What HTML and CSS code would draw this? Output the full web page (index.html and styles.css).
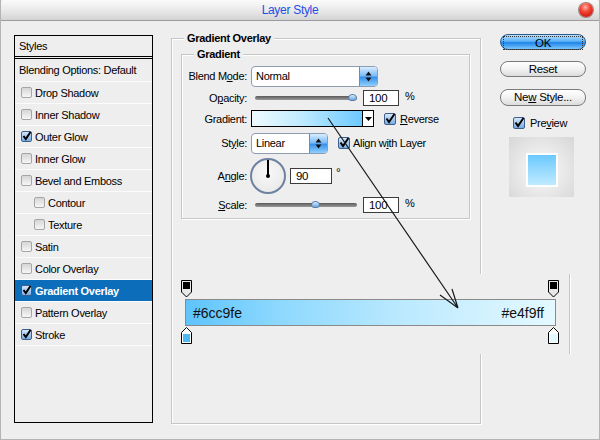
FILE: index.html
```html
<!DOCTYPE html>
<html lang="en">

<head>
  <meta charset="UTF-8" />
  <meta name="viewport" content="width=device-width, initial-scale=1.0" />
  <title>Layer Style</title>
  <link rel="stylesheet" href="styles.css">
</head>

<body>
  <div class="window">
    <div class="titlebar">
      <span class="title">Layer Style</span>
      <span class="close"></span>
    </div>

    <div class="main">
      <!-- left list of effects -->
      <div class="styles">
        <div class="styles-head">Styles</div>
        <div class="styles-blend">Blending Options: Default</div>
        <div class="item"><span class="cb"></span>Drop Shadow</div>
        <div class="item"><span class="cb"></span>Inner Shadow</div>
        <div class="item"><span class="cb on"><svg width="11" height="11" viewBox="0 0 11 11"><path d="M2.5 5 L4.8 8 L9.5 1" fill="none" stroke="#000" stroke-width="2"/></svg></span>Outer Glow</div>
        <div class="item"><span class="cb"></span>Inner Glow</div>
        <div class="item"><span class="cb"></span>Bevel and Emboss</div>
        <div class="item sub"><span class="cb"></span>Contour</div>
        <div class="item sub"><span class="cb"></span>Texture</div>
        <div class="item"><span class="cb"></span>Satin</div>
        <div class="item"><span class="cb"></span>Color Overlay</div>
        <div class="item selected"><span class="cb on"><svg width="11" height="11" viewBox="0 0 11 11"><path d="M2.5 5 L4.8 8 L9.5 1" fill="none" stroke="#000" stroke-width="2"/></svg></span>Gradient Overlay</div>
        <div class="item"><span class="cb"></span>Pattern Overlay</div>
        <div class="item"><span class="cb on"><svg width="11" height="11" viewBox="0 0 11 11"><path d="M2.5 5 L4.8 8 L9.5 1" fill="none" stroke="#000" stroke-width="2"/></svg></span>Stroke</div>
      </div>

      <!-- settings -->
      <div class="group outer">
        <div class="legend">Gradient Overlay</div>
        <div class="group inner">
          <div class="legend">Gradient</div>
          <div class="form">
            <div class="frow r-blend">
              <label>Blend M<u>o</u>de:</label>
              <div class="select blend">
                <span>Normal</span>
                <span class="spin"><svg width="7" height="11" viewBox="0 0 7 11"><path d="M3.5 0.5 L6.5 4.5 H0.5 Z M3.5 10.5 L6.5 6.5 H0.5 Z" fill="#111"/></svg></span>
              </div>
            </div>
            <div class="frow r-opacity">
              <label>O<u>p</u>acity:</label>
              <div class="slider"><span class="knob" style="left: 97px"></span></div>
              <div class="field num">100</div>
              <span class="unit">%</span>
            </div>
            <div class="frow r-gradient">
              <label>Gradient:</label>
              <div class="grad-pick">
                <span class="grad-swatch"></span>
                <span class="grad-drop"><svg width="7" height="4" viewBox="0 0 7 4"><path d="M0 0 H7 L3.5 4 Z" fill="#000"/></svg></span>
              </div>
              <span class="cb big on"><svg width="12" height="12" viewBox="0 0 12 12"><path d="M2.5 5.5 L5 9 L10.5 1" fill="none" stroke="#000" stroke-width="2"/></svg></span>
              <span class="check-label"><u>R</u>everse</span>
            </div>
            <div class="frow r-style">
              <label>St<u>y</u>le:</label>
              <div class="select kind">
                <span>Linear</span>
                <span class="spin"><svg width="7" height="11" viewBox="0 0 7 11"><path d="M3.5 0.5 L6.5 4.5 H0.5 Z M3.5 10.5 L6.5 6.5 H0.5 Z" fill="#111"/></svg></span>
              </div>
              <span class="cb big on align"><svg width="12" height="12" viewBox="0 0 12 12"><path d="M2.5 5.5 L5 9 L10.5 1" fill="none" stroke="#000" stroke-width="2"/></svg></span>
              <span class="check-label">Align w<u>i</u>th Layer</span>
            </div>
            <div class="frow r-angle">
              <label>A<u>n</u>gle:</label>
              <div class="dial"><span class="needle"></span><span class="hub"></span></div>
              <div class="field deg">90</div>
              <span class="degree">°</span>
            </div>
            <div class="frow r-scale">
              <label><u>S</u>cale:</label>
              <div class="slider"><span class="knob" style="left: 60px"></span></div>
              <div class="field num">100</div>
              <span class="unit">%</span>
            </div>
          </div>
        </div>
      </div>

      <!-- buttons -->
      <div class="actions">
        <div class="btn ok"><span>OK</span></div>
        <div class="btn">Reset</div>
        <div class="btn">Ne<u>w</u> Style...</div>
        <div class="preview-check">
          <span class="cb big on"><svg width="12" height="12" viewBox="0 0 12 12"><path d="M2.5 5.5 L5 9 L10.5 1" fill="none" stroke="#000" stroke-width="2"/></svg></span>
          <span>Pre<u>v</u>iew</span>
        </div>
        <div class="preview"><span class="preview-swatch"></span></div>
      </div>
    </div>

    <!-- gradient editor strip pasted over the dialog -->
    <div class="editor">
      <div class="stops">
        <svg width="11" height="18" viewBox="0 0 11 18"><path d="M0.5 0.5 H10.5 V12 L5.5 17 L0.5 12 Z" fill="#e8e8e8" stroke="#000"/><rect x="2" y="2" width="7" height="7" fill="#000"/></svg>
        <svg width="11" height="18" viewBox="0 0 11 18"><path d="M0.5 0.5 H10.5 V12 L5.5 17 L0.5 12 Z" fill="#e8e8e8" stroke="#000"/><rect x="2" y="2" width="7" height="7" fill="#000"/></svg>
      </div>
      <div class="bar">
        <span>#6cc9fe</span>
        <span>#e4f9ff</span>
      </div>
      <div class="stops bottom">
        <svg width="11" height="17" viewBox="0 0 11 17"><path d="M5.5 0.5 L10.5 5.5 V16.5 H0.5 V5.5 Z" fill="#fff" stroke="#000"/><rect x="2" y="7" width="7" height="8" fill="#4db8f4"/></svg>
        <svg width="11" height="17" viewBox="0 0 11 17"><path d="M5.5 0.5 L10.5 5.5 V16.5 H0.5 V5.5 Z" fill="#fff" stroke="#000"/><rect x="2" y="7" width="7" height="8" fill="#e4f9ff"/></svg>
      </div>
    </div>

    <svg class="arrow" width="600" height="440" viewBox="0 0 600 440">
      <path d="M327 118 L457 308 M457 308 L439 295 M457 308 L451 289" fill="none" stroke="#1a1a1a" stroke-width="1.2"/>
    </svg>
  </div>
</body>

</html>
```

FILE: styles.css
```css
body {
  margin: 0;
  background: #eeeeee;
  font-family: "Liberation Sans", Arial, sans-serif;
  font-size: 11px;
  letter-spacing: -0.3px;
  color: #000;
}

u {
  text-decoration: underline;
  text-underline-offset: 1px;
}

.window {
  position: relative;
  width: 600px;
  height: 440px;
  box-sizing: border-box;
  border: 1px solid #b4b4b4;
  border-top: none;
  background: #eeeeee;
  overflow: hidden;
}

.titlebar {
  height: 20px;
  display: flex;
  align-items: center;
  border-bottom: 1px solid #9c9c9c;
  background: linear-gradient(#fbfbfb, #e6e6e6 60%, #d3d3d3);
  border-radius: 4px 4px 0 0;
}

.title {
  flex: 1;
  text-align: center;
  color: #1d4fe6;
  font-size: 12px;
}

.close {
  width: 14px;
  height: 14px;
  margin-right: 6px;
  border-radius: 50%;
  background: radial-gradient(circle at 45% 30%, #ffb0a8 0, #f04030 40%, #b80c00 100%);
  box-shadow: 0 0 0 1px #a08080;
}

.main {
  display: flex;
  align-items: flex-start;
}

/* effect list */
.styles {
  margin: 14px 0 0 13px;
  width: 139px;
  height: 388px;
  box-sizing: border-box;
  border: 1px solid #000;
}

.styles-head {
  height: 20px;
  line-height: 20px;
  padding-left: 4px;
  border-bottom: 3px double #000;
}

.styles-blend {
  height: 22px;
  line-height: 22px;
  padding-left: 4px;
  border-bottom: 1px solid #fbfbfb;
}

.item {
  height: 21px;
  display: flex;
  align-items: center;
  padding-left: 6px;
  border-bottom: 1px solid #fbfbfb;
}

.item .cb {
  margin-right: 3px;
}

.item.sub {
  padding-left: 19px;
}

.item.selected {
  background: #0c6dbb;
  color: #fff;
  font-weight: bold;
}

.cb {
  flex: none;
  display: inline-block;
  width: 11px;
  height: 11px;
  box-sizing: border-box;
  margin-right: 2px;
  border: 1px solid #a6a6a6;
  border-radius: 2px;
  background: linear-gradient(#d6d6d6, #f6f6f6);
}

.cb.on {
  border-color: #3f5f8a;
  background: linear-gradient(#d5e7fa, #78ace3);
}

.cb svg {
  display: block;
  margin: -1px 0 0 -1px;
}

.cb.big {
  width: 12px;
  height: 12px;
}

/* etched group boxes */
.group {
  box-sizing: border-box;
  border: 1px solid #c6c6c6;
  box-shadow: inset 1px 1px 0 #fff, 1px 1px 0 #fff;
}

.group.outer {
  margin: 17px 0 0 18px;
  width: 310px;
  height: 386px;
}

.group.inner {
  margin: 9px 10px 0 9px;
  height: 165px;
}

.legend {
  display: table;
  margin: -7px 0 0 12px;
  padding: 0 3px;
  line-height: 13px;
  background: #eeeeee;
  font-weight: bold;
}

.form {
  padding-top: 4px;
}

.frow {
  display: flex;
  align-items: center;
}

.frow label {
  width: 65px;
  margin-right: 4px;
  text-align: right;
}

.r-blend,
.r-opacity,
.r-scale {
  height: 22px;
}

.r-gradient {
  height: 19px;
}

.r-style {
  height: 30px;
}

.r-angle {
  height: 36px;
}

.select {
  display: flex;
  align-items: center;
  justify-content: space-between;
  height: 21px;
  box-sizing: border-box;
  border: 1px solid #8d9cb0;
  border-radius: 4px;
  background: #fff;
  padding-left: 4px;
  overflow: hidden;
}

.select.blend {
  width: 127px;
}

.select.kind {
  width: 77px;
}

.spin {
  width: 17px;
  height: 19px;
  display: flex;
  align-items: center;
  justify-content: center;
  border-left: 1px solid #5c8fc8;
  background: linear-gradient(#d8eeff, #7dbcf6 45%, #3b92ea 55%, #8fd0ff);
}

.slider {
  position: relative;
  margin-left: 4px;
  width: 102px;
  height: 4px;
  border-radius: 2px;
  background: linear-gradient(#5a5a5a, #9a9a9a);
}

.knob {
  position: absolute;
  top: -2px;
  width: 9px;
  height: 7px;
  border-radius: 4px 4px 3px 3px;
  background: linear-gradient(#d6ecff, #6aa8e0);
  border: 1px solid #5a7ea6;
  box-sizing: border-box;
  margin-left: -4px;
}

.field {
  height: 16px;
  box-sizing: border-box;
  border: 1px solid #3c3c3c;
  background: #fff;
  line-height: 14px;
  padding-left: 5px;
  font-size: 11.5px;
}

.field.num {
  width: 36px;
  margin-left: 6px;
}

.unit {
  margin-left: 6px;
  align-self: flex-start;
  margin-top: 3px;
}

.grad-pick {
  display: flex;
  height: 17px;
  box-sizing: border-box;
  border: 1px solid #000;
}

.grad-swatch {
  width: 110px;
  background: linear-gradient(to right, #effbff, #bfeaff 45%, #6cc9fe);
  border-right: 1px solid #000;
}

.grad-drop {
  width: 10px;
  display: flex;
  align-items: center;
  justify-content: center;
  background: #fff;
}

.r-gradient .cb {
  margin-left: 10px;
  margin-right: 4px;
}

.r-style .cb {
  margin-left: 10px;
  margin-right: 3px;
}

.dial {
  position: relative;
  margin-left: -1px;
  width: 36px;
  height: 36px;
  box-sizing: border-box;
  border-radius: 50%;
  border: 2px solid #6d82a0;
  background: radial-gradient(circle at 50% 40%, #f8f8f8, #e6e6e6);
}

.needle {
  position: absolute;
  left: 15px;
  top: 0;
  width: 2px;
  height: 16px;
  background: #000;
}

.hub {
  position: absolute;
  left: 14px;
  top: 14px;
  width: 4px;
  height: 4px;
  border-radius: 50%;
  background: #000;
}

.field.deg {
  width: 42px;
  margin-left: 4px;
}

.degree {
  align-self: flex-start;
  margin: 8px 0 0 4px;
  font-size: 12px;
}

/* right buttons */
.actions {
  margin: 13px 0 0 19px;
  width: 86px;
  display: flex;
  flex-direction: column;
}

.btn {
  height: 16px;
  box-sizing: border-box;
  border: 1px solid #7a7a7a;
  border-radius: 8px;
  background: linear-gradient(#ffffff, #f2f2f2 50%, #dcdcdc);
  text-align: center;
  line-height: 14px;
  font-size: 11.5px;
  margin-top: 11px;
}

.btn + .btn + .btn {
  height: 17px;
  line-height: 15px;
  margin-top: 12px;
}

.btn.ok {
  margin-top: 0;
  border-color: #2c5b8e;
  background: linear-gradient(#bfe2ff, #5ab2f8 45%, #1f84e6 55%, #7cc8ff);
  padding: 1px 2px;
}

.btn.ok span {
  display: block;
  height: 12px;
  line-height: 12px;
  border: 1px dotted #333;
}

.preview-check {
  display: flex;
  align-items: center;
  margin: 10px 0 0 13px;
  height: 13px;
}

.preview-check .cb {
  margin-right: 5px;
}

.preview {
  margin: 8px 0 0 9px;
  width: 65px;
  height: 60px;
  display: flex;
  justify-content: center;
  align-items: flex-start;
  padding-top: 16px;
  box-sizing: border-box;
  background: radial-gradient(ellipse at 50% 55%, #f0f0f0 30%, #d6d6d6 100%);
}

.preview-swatch {
  width: 28px;
  height: 30px;
  border: 2px solid #fff;
  background: linear-gradient(#6cc9fe, #bfeaff);
}

/* gradient editor strip */
.editor {
  position: absolute;
  left: 172px;
  top: 274px;
  width: 396px;
  height: 80px;
  background: #eeeeee;
  border-right: 1px solid #c6c6c6;
  box-shadow: 1px 0 0 #fff;
}

.stops {
  margin: 6px 0 0 8px;
  width: 378px;
  height: 18px;
  display: flex;
  justify-content: space-between;
}

.stops svg {
  display: block;
}

.stops.bottom {
  margin-top: 1px;
  height: 17px;
}

.bar {
  margin: 1px 0 0 12px;
  width: 371px;
  height: 27px;
  box-sizing: border-box;
  border: 1px solid #8a8a8a;
  background: linear-gradient(to right, #5ec4fb, #8dd8fe 25%, #bdeafe 60%, #e4f9ff);
  display: flex;
  align-items: center;
  justify-content: space-between;
  padding: 0 11px 0 7px;
  font-size: 14px;
  letter-spacing: 0;
  color: #111;
}

.arrow {
  position: absolute;
  left: 0;
  top: 0;
  pointer-events: none;
}
```
